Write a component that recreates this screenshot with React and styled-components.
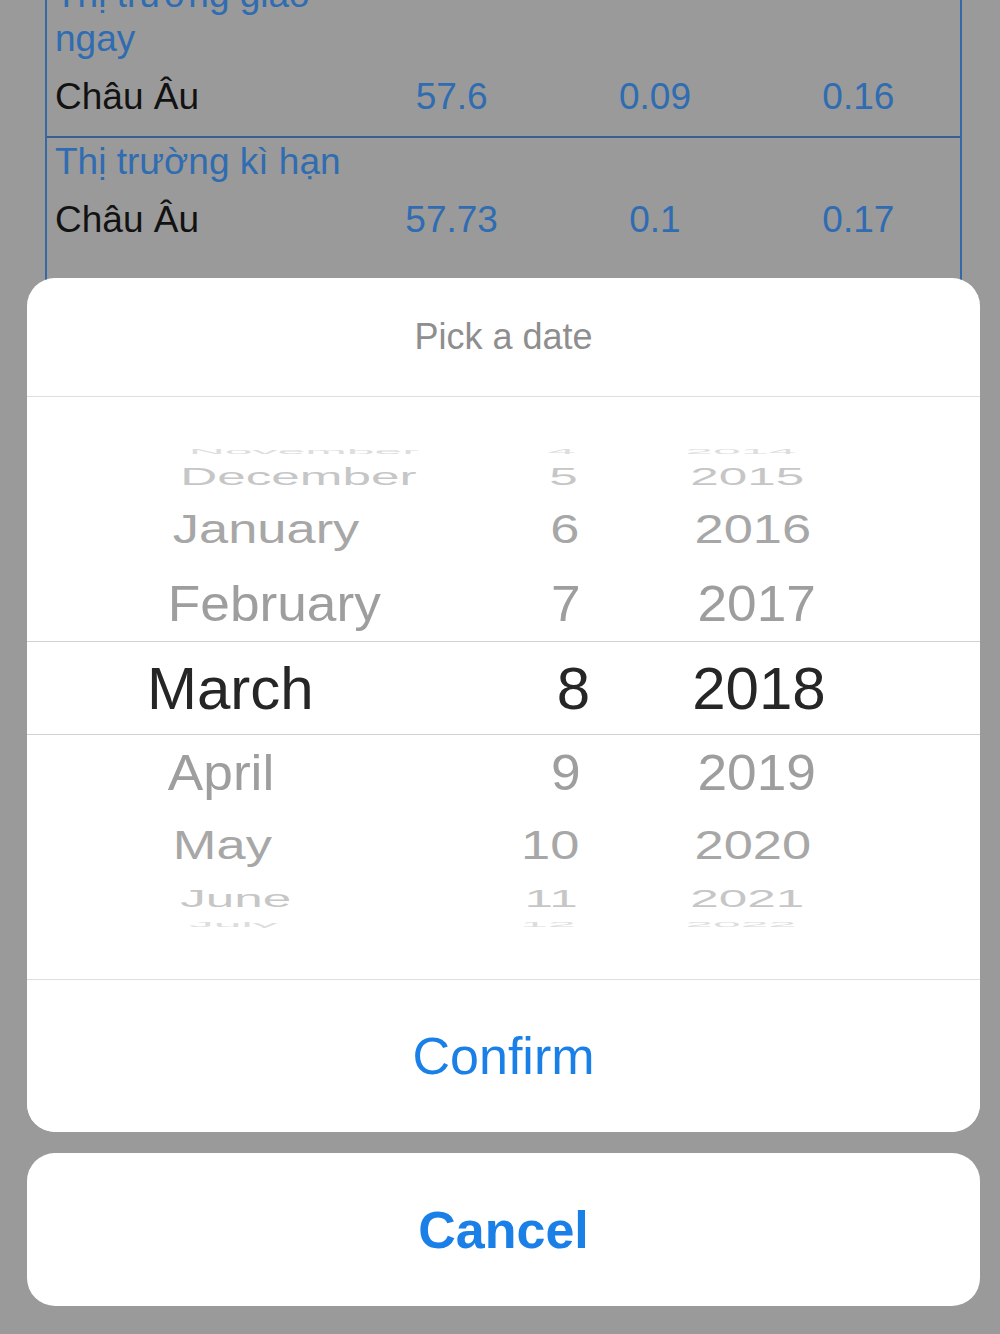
import React from "react";
import styled, { createGlobalStyle } from "styled-components";

const GlobalStyle = createGlobalStyle`
  html, body {
    margin: 0;
    padding: 0;
  }
  body {
    background: #9a9a9a;
    font-family: "Liberation Sans", Arial, sans-serif;
    overflow: hidden;
  }
`;

const Screen = styled.div`
  position: relative;
  height: 1334px;
  overflow: hidden;
  background: #9a9a9a;
`;

/* ---- dimmed page behind the sheet ---- */

const Table = styled.div`
  margin: -29px 38px 0 45px;
  border-left: 2px solid #3768a6;
  border-right: 2px solid #3768a6;
`;

const Section = styled.div`
  padding: 2px 0 ${(p) => (p.$last ? "60px" : "9px")};
  border-bottom: ${(p) => (p.$last ? "none" : "2px solid #3a5f8f")};
`;

const SectionTitle = styled.div`
  width: 303px;
  box-sizing: border-box;
  padding-left: 8px;
  font-size: 37px;
  line-height: 44px;
  color: #2f6cb1;
`;

const DataRow = styled.div`
  display: grid;
  grid-template-columns: 303px repeat(3, 1fr);
  height: 60px;
  line-height: 60px;
  margin-top: 6px;
  font-size: 37px;
`;

const Label = styled.span`
  padding-left: 8px;
  color: #121212;
`;

const Value = styled.span`
  text-align: center;
  color: #2f6cb1;
`;

/* ---- action sheet ---- */

const ActionSheet = styled.div`
  position: absolute;
  left: 27px;
  right: 20px;
  bottom: 28px;
  display: flex;
  flex-direction: column;
  gap: 21px;
`;

const Card = styled.div`
  background: #ffffff;
  border-radius: 28px;
  overflow: hidden;
`;

const SheetTitle = styled.div`
  height: 118px;
  display: flex;
  align-items: center;
  justify-content: center;
  font-size: 36px;
  color: #8e8e8e;
  border-bottom: 1px solid #dedede;
`;

const Wheel = styled.div`
  height: 582px;
  display: flex;
  flex-direction: column;
  justify-content: center;
  overflow: hidden;
  border-bottom: 1px solid #dedede;
`;

const WheelRow = styled.div`
  display: grid;
  grid-template-columns: ${(p) => p.$cols};
  column-gap: 57px;
  align-items: center;
  align-content: center;
  box-sizing: border-box;
  padding-left: ${(p) => p.$pad}px;
  font-size: ${(p) => p.$size}px;
  color: ${(p) => p.$color};
  white-space: nowrap;
  transform-origin: 50% 50%;
  flex-shrink: 0;
`;

const SelectedRow = styled(WheelRow)`
  height: 94px;
  border-top: 1px solid #d2d2d2;
  border-bottom: 1px solid #d2d2d2;
`;

const Month = styled.span`
  text-align: left;
`;

const Day = styled.span`
  text-align: right;
`;

const Year = styled.span`
  text-align: center;
`;

const ActionButton = styled.button`
  display: flex;
  align-items: center;
  justify-content: center;
  width: 100%;
  height: ${(p) => p.$height}px;
  padding: 0;
  border: none;
  border-radius: ${(p) => (p.$rounded ? "28px" : "0")};
  background: #ffffff;
  font-family: "Liberation Sans", Arial, sans-serif;
  font-size: 52px;
  font-weight: ${(p) => (p.$bold ? 700 : 400)};
  color: #1a7fe6;
  cursor: pointer;
`;

const sections = [
  { title: "Thị trường giao ngay", values: ["57.6", "0.09", "0.16"] },
  { title: "Thị trường kì hạn", values: ["57.73", "0.1", "0.17"] },
];

const months = ["November", "December", "January", "February", "March", "April", "May", "June", "July"];
const days = [4, 5, 6, 7, 8, 9, 10, 11, 12];
const years = [2014, 2015, 2016, 2017, 2018, 2019, 2020, 2021, 2022];
const fade = ["#262626", "#9e9e9e", "#a7a7a7", "#c6c6c6", "#dddddd"];

// the wheel is a cylinder seen from the front
const RADIUS = 238;
const STEP = (20.8 * Math.PI) / 180;
const DEPTH = 2900;
const HALF_BAND = 47;

function slotHeights() {
  const bounds = [HALF_BAND];
  for (let k = 1; k <= 4; k++) {
    bounds.push(2 * RADIUS * Math.sin(k * STEP) - bounds[k - 1]);
  }
  return bounds.slice(1).map((b, i) => b - bounds[i]);
}

const heights = slotHeights();

function rowStyle(k) {
  const a = Math.abs(k);
  const cos = Math.cos(a * STEP);
  const sx = DEPTH / (DEPTH + RADIUS * (1 - cos));
  return { height: `${heights[a - 1]}px`, transform: `scale(${sx}, ${cos})` };
}

const DatePicker = () => (
  <Wheel>
    {months.map((m, i) => {
      const k = i - 4;
      if (k === 0) {
        return (
          <SelectedRow key={m} $cols="286px 100px 224px" $pad={120} $size={60} $color={fade[0]}>
            <Month>{m}</Month>
            <Day>{days[i]}</Day>
            <Year>{years[i]}</Year>
          </SelectedRow>
        );
      }
      return (
        <WheelRow
          key={m}
          $cols="258px 100px 240px"
          $pad={139}
          $size={53.5}
          $color={fade[Math.abs(k)]}
          style={rowStyle(k)}
        >
          <Month>{m}</Month>
          <Day>{days[i]}</Day>
          <Year>{years[i]}</Year>
        </WheelRow>
      );
    })}
  </Wheel>
);

const App = () => {
  return (
    <Screen>
      <GlobalStyle />
      <Table>
        {sections.map((s, i) => (
          <Section key={s.title} $last={i === sections.length - 1}>
            <SectionTitle>{s.title}</SectionTitle>
            <DataRow>
              <Label>Châu Âu</Label>
              {s.values.map((v) => (
                <Value key={v}>{v}</Value>
              ))}
            </DataRow>
          </Section>
        ))}
      </Table>

      <ActionSheet>
        <Card>
          <SheetTitle>Pick a date</SheetTitle>
          <DatePicker />
          <ActionButton $height={152}>Confirm</ActionButton>
        </Card>
        <ActionButton $height={153} $rounded $bold>
          Cancel
        </ActionButton>
      </ActionSheet>
    </Screen>
  );
};

export default App;
